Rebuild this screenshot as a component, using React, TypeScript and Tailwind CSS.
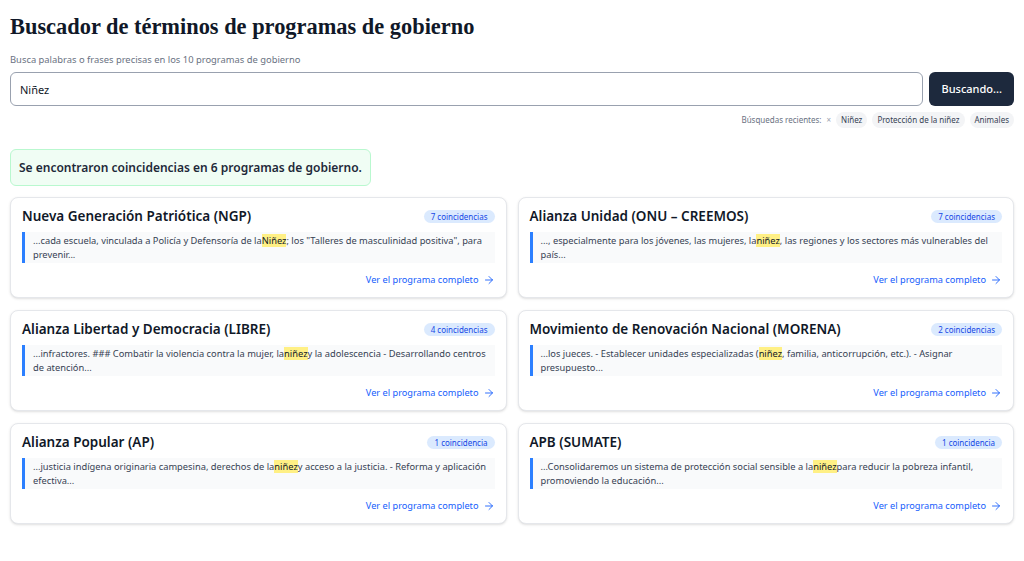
import { ArrowRight } from 'lucide-react'

type Result = {
    name: string
    count: number
    before: string
    match: string
    after: string
}

const results: Result[] = [
    {
        name: 'Nueva Generación Patriótica (NGP)',
        count: 7,
        before: '...cada escuela, vinculada a Policía y Defensoría de la',
        match: 'Niñez',
        after: '; los "Talleres de masculinidad positiva", para prevenir...'
    },
    {
        name: 'Alianza Unidad (ONU – CREEMOS)',
        count: 7,
        before: '..., especialmente para los jóvenes, las mujeres, la',
        match: 'niñez',
        after: ', las regiones y los sectores más vulnerables del país...'
    },
    {
        name: 'Alianza Libertad y Democracia (LIBRE)',
        count: 4,
        before: '...infractores. ### Combatir la violencia contra la mujer, la',
        match: 'niñez',
        after: 'y la adolescencia - Desarrollando centros de atención...'
    },
    {
        name: 'Movimiento de Renovación Nacional (MORENA)',
        count: 2,
        before: '...los jueces. - Establecer unidades especializadas (',
        match: 'niñez',
        after: ', familia, anticorrupción, etc.). - Asignar presupuesto...'
    },
    {
        name: 'Alianza Popular (AP)',
        count: 1,
        before: '...justicia indígena originaria campesina, derechos de la',
        match: 'niñez',
        after: 'y acceso a la justicia. - Reforma y aplicación efectiva...'
    },
    {
        name: 'APB (SUMATE)',
        count: 1,
        before: '...Consolidaremos un sistema de protección social sensible a la',
        match: 'niñez',
        after: 'para reducir la pobreza infantil, promoviendo la educación...'
    }
]

const recent = ['Niñez', 'Protección de la niñez', 'Animales']

function ResultCard({ result }: { result: Result }) {
    return (
        <div className="flex flex-col rounded-lg border border-gray-200 bg-white px-[11px] pt-[11px] pb-[10px] shadow-sm">
            <div className="flex items-center justify-between gap-3">
                <h3 className="text-[13.5px] leading-[15px] font-semibold text-gray-900">
                    {result.name}
                </h3>
                <span className="rounded-full bg-blue-100 px-[7px] py-[1px] text-[8px] leading-[11px] text-blue-700">
                    {result.count}{' '}
                    {result.count === 1 ? 'coincidencia' : 'coincidencias'}
                </span>
            </div>
            <p className="mt-[8px] border-l-[3px] border-blue-500 bg-gray-50 py-[2px] pr-[3px] pl-[8px] text-[9.3px] leading-[13.5px] text-gray-700">
                {result.before}
                <mark className="bg-yellow-200 text-gray-900">
                    {result.match}
                </mark>
                {result.after}
            </p>
            <div className="mt-[10px] flex justify-end">
                <a className="flex items-center gap-1 text-[9.2px] leading-[14px] text-blue-600">
                    Ver el programa completo
                    <ArrowRight className="h-3 w-3" strokeWidth={1.75} />
                </a>
            </div>
        </div>
    )
}

export default function App() {
    return (
        <div className="min-h-screen bg-white px-[10px] pt-[13px] font-['Noto_Sans',sans-serif]">
            <h1 className="font-['Liberation_Serif',serif] text-[22.4px] leading-[27px] font-bold text-gray-900">
                Buscador de términos de programas de gobierno
            </h1>
            <p className="mt-[14px] text-[9.4px] leading-[12px] text-gray-500">
                Busca palabras o frases precisas en los 10 programas de gobierno
            </p>
            <div className="mt-[6px] flex gap-[6px]">
                <input
                    className="h-[34px] flex-1 rounded-md border border-gray-400 px-[9px] text-[11px] text-gray-900 outline-none"
                    defaultValue="Niñez"
                />
                <button className="h-[34px] rounded-md bg-slate-800 px-[12px] text-[11px] font-medium text-white">
                    Buscando...
                </button>
            </div>
            <div className="mt-[6px] flex items-center justify-end gap-[5px] text-[8px] text-gray-500">
                <span>Búsquedas recientes:</span>
                <span className="text-gray-400">×</span>
                {recent.map((item) => (
                    <span
                        key={item}
                        className="rounded-full bg-gray-100 px-[5px] py-[2px] text-gray-700"
                    >
                        {item}
                    </span>
                ))}
            </div>
            <div className="mt-[21px] inline-block rounded-md border border-green-200 bg-green-50 px-[8px] py-[9px] text-[12px] leading-[17px] font-semibold text-gray-800">
                Se encontraron coincidencias en 6 programas de gobierno.
            </div>
            <div className="mt-[11px] grid grid-cols-2 gap-x-[11px] gap-y-[12px]">
                {results.map((result) => (
                    <ResultCard key={result.name} result={result} />
                ))}
            </div>
        </div>
    )
}
